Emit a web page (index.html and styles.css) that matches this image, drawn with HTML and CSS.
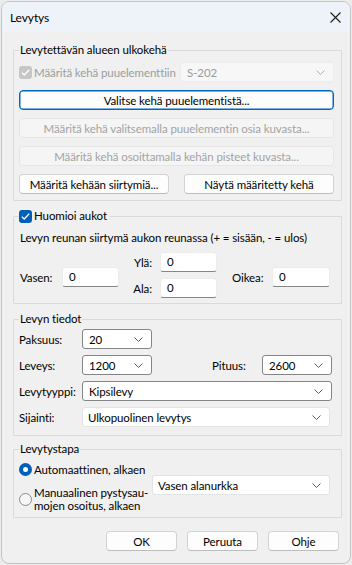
FILE: index.html
```html
<!doctype html>
<html>
	<head>
		<meta charset="utf-8">
		<title>Levytys</title>
		<link rel="stylesheet" href="styles.css">
	</head>
	<body>
		<div class="dialog">
			<div class="titlebar">
				<span class="title">Levytys</span>
				<svg class="close" width="11" height="11" viewBox="0 0 11 11"><path d="M0.5 0.5 L10.5 10.5 M10.5 0.5 L0.5 10.5" stroke="#1b1b1b" stroke-width="1.1" fill="none"/></svg>
			</div>
			<div class="content">
				<fieldset class="group g-outline">
					<legend>Levytettävän alueen ulkokehä</legend>
					<div class="row">
						<label class="check is-disabled"><span class="box on"><svg width="9" height="7" viewBox="0 0 9 7"><path d="M0.8 3.6 L3.2 6 L8.2 0.8" stroke="#fff" stroke-width="1.3" fill="none"/></svg></span>Määritä kehä puuelementtiin</label>
						<div class="combo is-off c-s202"><span>S-202</span><svg class="chev" width="9" height="5" viewBox="0 0 9 5"><path d="M0.5 0.5 L4.5 4.5 L8.5 0.5" stroke="#b0b0b0" fill="none"/></svg></div>
					</div>
					<button class="btn is-focus">Valitse kehä puuelementistä...</button>
					<button class="btn" disabled>Määritä kehä valitsemalla puuelementin osia kuvasta...</button>
					<button class="btn" disabled>Määritä kehä osoittamalla kehän pisteet kuvasta...</button>
					<div class="row pair">
						<button class="btn">Määritä kehään siirtymiä...</button>
						<button class="btn">Näytä määritetty kehä</button>
					</div>
				</fieldset>

				<fieldset class="group g-holes">
					<legend><label class="check"><span class="box on blue"><svg width="9" height="7" viewBox="0 0 9 7"><path d="M0.8 3.6 L3.2 6 L8.2 0.8" stroke="#fff" stroke-width="1.3" fill="none"/></svg></span>Huomioi aukot</label></legend>
					<div class="note">Levyn reunan siirtymä aukon reunassa (+ = sisään, - = ulos)</div>
					<div class="offsets">
						<div class="side">
							<span class="lbl l-vasen">Vasen:</span>
							<div class="field">0</div>
						</div>
						<div class="middle">
							<span class="lbl l-mid">Ylä:</span>
							<div class="field">0</div>
							<span class="lbl l-mid">Ala:</span>
							<div class="field">0</div>
						</div>
						<div class="side s-right">
							<span class="lbl l-oikea">Oikea:</span>
							<div class="field f-wide">0</div>
						</div>
					</div>
				</fieldset>

				<fieldset class="group g-info">
					<legend>Levyn tiedot</legend>
					<div class="row">
						<span class="lbl l-info">Paksuus:</span>
						<div class="combo edit c-short"><span>20</span><svg class="chev" width="9" height="5" viewBox="0 0 9 5"><path d="M0.5 0.5 L4.5 4.5 L8.5 0.5" stroke="#5f5f5f" fill="none"/></svg></div>
					</div>
					<div class="row">
						<span class="lbl l-info">Leveys:</span>
						<div class="combo edit c-short"><span>1200</span><svg class="chev" width="9" height="5" viewBox="0 0 9 5"><path d="M0.5 0.5 L4.5 4.5 L8.5 0.5" stroke="#5f5f5f" fill="none"/></svg></div>
						<span class="lbl l-pituus">Pituus:</span>
						<div class="combo edit c-short"><span>2600</span><svg class="chev" width="9" height="5" viewBox="0 0 9 5"><path d="M0.5 0.5 L4.5 4.5 L8.5 0.5" stroke="#5f5f5f" fill="none"/></svg></div>
					</div>
					<div class="row">
						<span class="lbl l-info">Levytyyppi:</span>
						<div class="combo edit c-long"><span>Kipsilevy</span><svg class="chev" width="9" height="5" viewBox="0 0 9 5"><path d="M0.5 0.5 L4.5 4.5 L8.5 0.5" stroke="#5f5f5f" fill="none"/></svg></div>
					</div>
					<div class="row">
						<span class="lbl l-info">Sijainti:</span>
						<div class="combo list c-list"><span>Ulkopuolinen levytys</span><svg class="chev" width="9" height="5" viewBox="0 0 9 5"><path d="M0.5 0.5 L4.5 4.5 L8.5 0.5" stroke="#5f5f5f" fill="none"/></svg></div>
					</div>
				</fieldset>

				<fieldset class="group g-method">
					<legend>Levytystapa</legend>
					<div class="method">
						<div class="radios">
							<label class="radio"><span class="dot on"></span>Automaattinen, alkaen</label>
							<label class="radio r-two"><span class="dot"></span><span>Manuaalinen pystysau-<br>mojen osoitus, alkaen</span></label>
						</div>
						<div class="combo list c-corner"><span>Vasen alanurkka</span><svg class="chev" width="9" height="5" viewBox="0 0 9 5"><path d="M0.5 0.5 L4.5 4.5 L8.5 0.5" stroke="#5f5f5f" fill="none"/></svg></div>
					</div>
				</fieldset>

				<div class="actions">
					<button class="btn">OK</button>
					<button class="btn">Peruuta</button>
					<button class="btn">Ohje</button>
				</div>
			</div>
		</div>
	</body>
</html>
```

FILE: styles.css
```css
body {
	margin: 0;
	background: #ececec;
	font-family: Lato, "Liberation Sans", sans-serif;
	font-size: 11.5px;
	letter-spacing: -0.1px;
	color: #000;
}

.dialog {
	box-sizing: border-box;
	width: 350px;
	height: 563px;
	margin: 1px 0 0 1px;
	border: 1px solid #c4c4c4;
	border-radius: 8px;
	background: #f0f0f0;
	overflow: hidden;
}

.titlebar {
	height: 30px;
	display: flex;
	align-items: center;
	justify-content: space-between;
	padding: 0 9px 0 8px;
	background: #eef3f9;
}

.title {
	font-size: 12px;
}

.close {
	margin-top: 1px;
}

.content {
	padding: 0 8px 0 11px;
}

/* group boxes */

.group {
	margin: 0;
	border: 1px solid #dadada;
	border-radius: 1px;
	padding: 0 7px 6px 5px;
	display: flex;
	flex-direction: column;
}

.group legend {
	height: 16px;
	line-height: 16px;
	padding: 0 1px;
}

.g-outline {
	margin-top: 10px;
	padding-top: 4px;
	gap: 8px;
}

.g-holes {
	margin-top: 7px;
	padding-top: 6px;
	padding-bottom: 5px;
}

.g-holes legend {
	padding: 0 3px 0 0;
}

.g-info {
	margin-top: 7px;
	padding-top: 2px;
	padding-bottom: 8px;
	gap: 6px;
}

.g-method {
	margin-top: 5px;
	padding-top: 4px;
	padding-bottom: 5px;
}

.row {
	display: flex;
	align-items: center;
	height: 20px;
}

.pair {
	justify-content: space-between;
}

.pair .btn {
	width: 150px;
}

/* checkbox */

.check {
	display: flex;
	align-items: center;
	gap: 2px;
	height: 16px;
	white-space: nowrap;
}

.check.is-disabled {
	color: #9d9d9d;
}

.box {
	box-sizing: border-box;
	flex: none;
	width: 13px;
	height: 13px;
	border-radius: 3px;
	display: flex;
	align-items: center;
	justify-content: center;
	background: #c6c6c6;
}

.box.blue {
	background: #005fb8;
}

/* buttons */

.btn {
	box-sizing: border-box;
	height: 20px;
	padding: 0;
	font: inherit;
	letter-spacing: inherit;
	color: #000;
	background: #fdfdfd;
	border: 1px solid #d3d3d3;
	border-bottom-color: #bdbdbd;
	border-radius: 4px;
	white-space: nowrap;
}

.btn.is-focus {
	border: 1px solid #0067c0;
	box-shadow: inset 0 0 0 0.5px #0067c0;
}

.btn:disabled {
	color: #a3a3a3;
	background: #f5f5f5;
	border-color: #e6e6e6;
}

/* combo boxes */

.combo {
	box-sizing: border-box;
	flex: none;
	height: 20px;
	display: flex;
	align-items: center;
	justify-content: space-between;
	padding: 0 8px 0 6px;
	background: #fff;
	border-radius: 3px;
	white-space: nowrap;
}

.combo.edit {
	border: 1px solid #858585;
	padding-left: 6px;
}

.combo.list {
	border: 1px solid #e3e3e3;
	padding-left: 5px;
}

.combo.is-off {
	background: #f7f7f7;
	border: 1px solid #ededed;
	color: #9a9a9a;
}

.c-s202 {
	width: 154px;
	margin-left: auto;
}

.c-short {
	width: 70px;
}

.c-long {
	width: 250px;
}

.c-list {
	width: 248px;
}

.c-corner {
	width: 178px;
	margin-top: 14px;
}

/* labels */

.lbl {
	display: block;
	flex: none;
	white-space: nowrap;
}

.l-info {
	width: 63px;
}

.l-pituus {
	width: 50px;
	margin-left: 60px;
}

/* opening offsets */

.note {
	height: 16px;
	line-height: 16px;
	padding-left: 1px;
	white-space: nowrap;
}

.offsets {
	display: flex;
	margin-top: 6px;
	height: 46px;
}

.side {
	display: flex;
	align-items: center;
	margin-top: 15px;
	height: 20px;
}

.l-vasen {
	width: 42px;
	padding-left: 1px;
}

.middle {
	display: grid;
	grid-template-columns: 27px 57px;
	column-gap: 8px;
	row-gap: 6px;
	margin-left: 6px;
	align-items: center;
}

.l-mid {
	text-align: right;
}

.s-right {
	margin-left: 15px;
}

.l-oikea {
	width: 40px;
}

.field {
	box-sizing: border-box;
	flex: none;
	width: 57px;
	height: 20px;
	line-height: 18px;
	padding-left: 6px;
	background: #fff;
	border: 1px solid #ececec;
	border-bottom-color: #868686;
	border-radius: 3px;
}

.f-wide {
	width: 58px;
}

/* method */

.method {
	display: flex;
	align-items: flex-start;
}

.radios {
	flex: none;
	width: 133px;
	display: flex;
	flex-direction: column;
	gap: 9px;
}

.radio {
	display: flex;
	align-items: center;
	gap: 2px;
	height: 16px;
	white-space: nowrap;
}

.radio.r-two {
	height: 26px;
	line-height: 13px;
}

.dot {
	box-sizing: border-box;
	flex: none;
	width: 13px;
	height: 13px;
	border-radius: 50%;
	border: 1px solid #8a8a8a;
	background: #f6f6f6;
}

.dot.on {
	border: 4px solid #005fb8;
	background: #fff;
}

/* dialog buttons */

.actions {
	display: flex;
	justify-content: flex-end;
	gap: 10px;
	margin: 13px 3px 0 0;
}

.actions .btn {
	width: 71px;
}
```
